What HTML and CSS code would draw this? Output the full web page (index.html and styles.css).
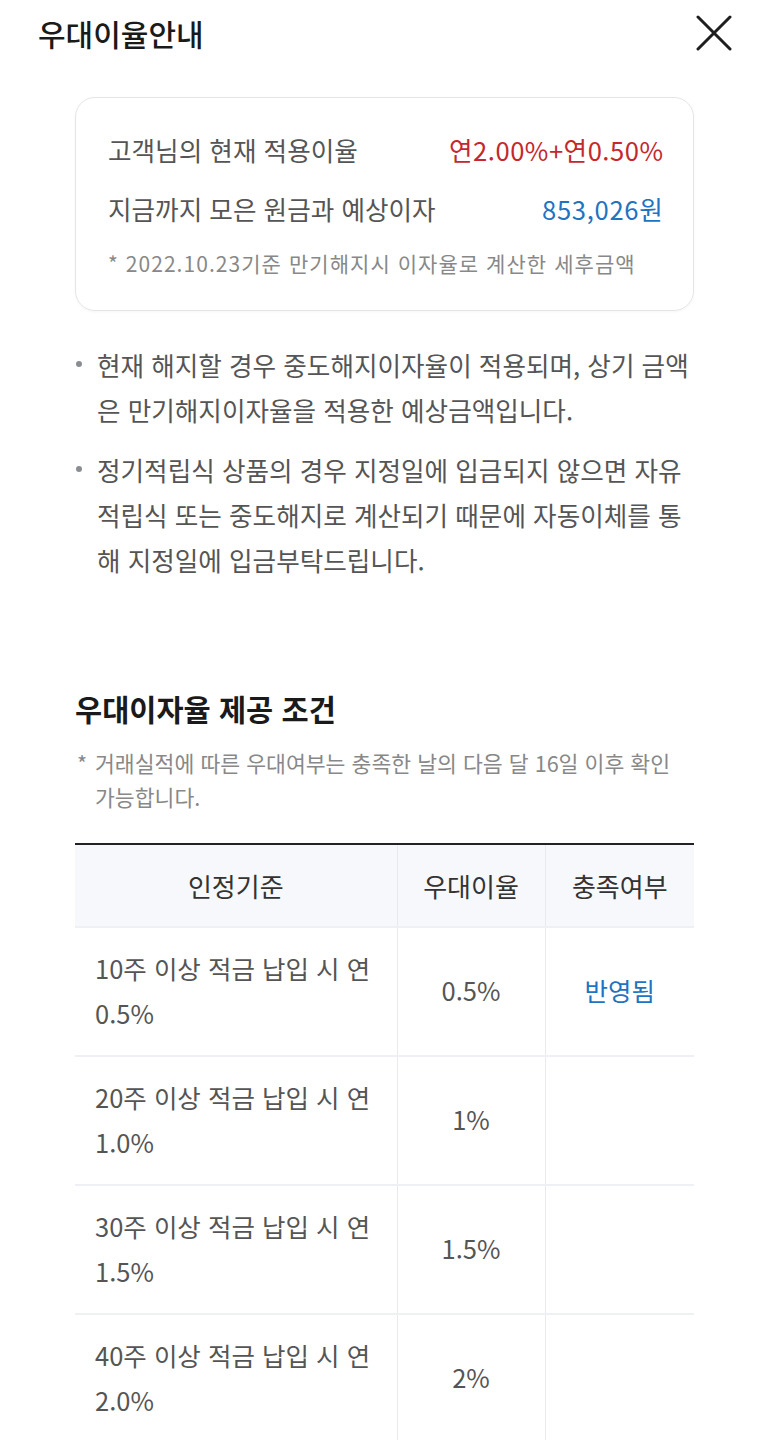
FILE: index.html
```html
<!DOCTYPE html>
<html lang="ko">
<head>
<meta charset="utf-8">
<title>우대이율안내</title>
<link rel="stylesheet" href="styles.css">
</head>
<body>
<header class="top">
  <h1 class="top-title">우대이율안내</h1>
  <button class="close" aria-label="닫기">
    <svg width="36" height="36" viewBox="0 0 36 36"><path d="M2 2 L34 34 M34 2 L2 34" stroke="#1e1e1e" stroke-width="3" stroke-linecap="round" fill="none"/></svg>
  </button>
</header>
<main class="content">
  <section class="card">
    <div class="card-row"><span class="label">고객님의 현재 적용이율</span><span class="value red">연2.00%+연0.50%</span></div>
    <div class="card-row"><span class="label">지금까지 모은 원금과 예상이자</span><span class="value blue num">853,026원</span></div>
    <p class="card-note">* 2022.10.23기준 만기해지시 이자율로 계산한 세후금액</p>
  </section>
  <ul class="bullets">
    <li>현재 해지할 경우 중도해지이자율이 적용되며, 상기 금액은 만기해지이자율을 적용한 예상금액입니다.</li>
    <li>정기적립식 상품의 경우 지정일에 입금되지 않으면 자유적립식 또는 중도해지로 계산되기 때문에 자동이체를 통해 지정일에 입금부탁드립니다.</li>
  </ul>
  <h2 class="sec-title">우대이자율 제공 조건</h2>
  <p class="sec-note"><span class="star">*</span>거래실적에 따른 우대여부는 충족한 날의 다음 달 16일 이후 확인 가능합니다.</p>
  <table class="cond">
    <colgroup><col class="c1"><col class="c2"><col class="c3"></colgroup>
    <thead>
      <tr><th>인정기준</th><th>우대이율</th><th>충족여부</th></tr>
    </thead>
    <tbody>
      <tr><td class="crit">10주 이상 적금 납입 시 연 0.5%</td><td>0.5%</td><td class="blue">반영됨</td></tr>
      <tr><td class="crit">20주 이상 적금 납입 시 연 1.0%</td><td>1%</td><td></td></tr>
      <tr><td class="crit">30주 이상 적금 납입 시 연 1.5%</td><td>1.5%</td><td></td></tr>
      <tr><td class="crit">40주 이상 적금 납입 시 연 2.0%</td><td>2%</td><td></td></tr>
    </tbody>
  </table>
</main>
</body>
</html>
```
FILE: styles.css
```css
* { box-sizing: border-box; }
html, body { margin: 0; padding: 0; background: #fff; }
body {
  font-family: "Noto Sans CJK KR", "Noto Sans", sans-serif;
  color: #555;
  width: 768px;
}
.top {
  display: flex;
  align-items: center;
  justify-content: space-between;
  height: 66px;
  padding: 0 36px 0 38px;
}
.top-title {
  margin: 0;
  font-size: 30px;
  font-weight: 500;
  color: #1a1a1a;
  letter-spacing: 0;
}
.close {
  border: 0;
  background: none;
  padding: 0;
  width: 36px;
  height: 36px;
  display: flex;
}
.content {
  padding: 31px 74px 0 75px;
}
.card {
  border: 1px solid #e4e5e7;
  border-radius: 20px;
  padding: 34px 30px 32px 32px;
  box-shadow: 0 1px 3px rgba(0,0,0,0.04);
}
.card-row {
  display: flex;
  justify-content: space-between;
  align-items: center;
  font-size: 25.6px;
  line-height: 36px;
}
.card-row + .card-row { margin-top: 23px; }
.label { color: #555; }
.value { letter-spacing: 0.5px; margin-right: -0.5px; }
.value.num { letter-spacing: 0.7px; }
.red { color: #c4282d; }
.blue { color: #1f73c1; }
.card-note {
  margin: 21px 0 0;
  font-size: 21px;
  line-height: 30px;
  color: #888;
  letter-spacing: 1.05px;
}
.bullets {
  list-style: none;
  margin: 31px 0 0;
  padding: 0;
}
.bullets li {
  position: relative;
  padding-left: 22px;
  font-size: 25.6px;
  line-height: 45px;
  color: #555;
}
.bullets li + li { margin-top: 15px; }
.bullets li::before {
  content: "";
  position: absolute;
  left: 1px;
  top: 19px;
  width: 6px;
  height: 6px;
  border-radius: 50%;
  background: #8a8d92;
}
.sec-title {
  margin: 106px 0 0;
  font-size: 29.5px;
  line-height: 40px;
  font-weight: 700;
  color: #1a1a1a;
}
.sec-note {
  position: relative;
  margin: 18px 0 0;
  padding-left: 20px;
  font-size: 21.6px;
  line-height: 34px;
  color: #888;
}
.star {
  position: absolute;
  left: 2px;
  top: 0;
}
.cond {
  width: 100%;
  margin-top: 29px;
  border-collapse: collapse;
  border-top: 2px solid #222;
  table-layout: fixed;
}
.c1 { width: 322px; }
.c2 { width: 148px; }
.c3 { width: auto; }
.cond th {
  height: 83px;
  padding-bottom: 2px;
  background: #f7f8fb;
  font-weight: 400;
  font-size: 26px;
  color: #333;
  text-align: center;
  border-left: 1px solid #e8eaee;
  border-bottom: 2px solid #eef0f3;
}
.cond td {
  height: 129px;
  padding: 16px 10px 20px;
  font-size: 25.5px;
  line-height: 45px;
  text-align: center;
  color: #555;
  border-left: 1px solid #e8eaee;
  border-bottom: 2px solid #eef0f3;
}
.cond th:first-child, .cond td:first-child { border-left: 0; }
.cond td.crit {
  text-align: left;
  padding: 16px 20px 20px 20px;
}
.cond td.blue { color: #1f73c1; }
```
